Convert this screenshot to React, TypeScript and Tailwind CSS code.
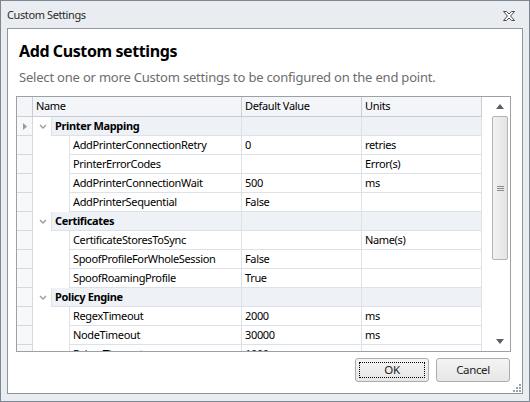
import React from "react";

type Row = { name: string; value: string; unit: string };
type Group = { title: string; rows: Row[] };

const groups: Group[] = [
  {
    title: "Printer Mapping",
    rows: [
      { name: "AddPrinterConnectionRetry", value: "0", unit: "retries" },
      { name: "PrinterErrorCodes", value: "", unit: "Error(s)" },
      { name: "AddPrinterConnectionWait", value: "500", unit: "ms" },
      { name: "AddPrinterSequential", value: "False", unit: "" },
    ],
  },
  {
    title: "Certificates",
    rows: [
      { name: "CertificateStoresToSync", value: "", unit: "Name(s)" },
      { name: "SpoofProfileForWholeSession", value: "False", unit: "" },
      { name: "SpoofRoamingProfile", value: "True", unit: "" },
    ],
  },
  {
    title: "Policy Engine",
    rows: [
      { name: "RegexTimeout", value: "2000", unit: "ms" },
      { name: "NodeTimeout", value: "30000", unit: "ms" },
      { name: "DriverTimeout", value: "1000", unit: "ms" },
    ],
  },
];

const line = "border-[#dde2e8]";

function CloseIcon() {
  return (
    <svg width="12" height="10" viewBox="0 0 12 10">
      <polygon
        points="0.5,0.5 3.5,0.5 6,3 8.5,0.5 11.5,0.5 7.5,5 11.5,9.5 8.5,9.5 6,7 3.5,9.5 0.5,9.5 4.5,5"
        fill="#fff"
        stroke="#4a4a4a"
        strokeWidth="1"
      />
    </svg>
  );
}

function Chevron() {
  return (
    <svg width="8" height="5" viewBox="0 0 8 5">
      <path d="M1 1 L4 4 L7 1" fill="none" stroke="#9a9a9a" strokeWidth="1.3" />
    </svg>
  );
}

function RowHead({ pointer = false }: { pointer?: boolean }) {
  return (
    <div className="flex h-[19px] w-[16px] shrink-0 items-center justify-center border-r border-b border-[#d5d9de] bg-[#f7f8f9]">
      {pointer && (
        <svg width="4" height="7" viewBox="0 0 4 7">
          <path d="M0 0 L4 3.5 L0 7 Z" fill="#9b9b9b" />
        </svg>
      )}
    </div>
  );
}

export default function App() {
  let first = true;
  return (
    <div className="relative h-[402px] w-[530px] overflow-hidden border border-[#7d8792] bg-[#e9ecf0] font-['Segoe_UI','Noto_Sans',sans-serif] text-[11px] tracking-[-0.35px] text-black">
      {/* title bar */}
      <div className="flex h-[27px] items-center justify-between pl-[6px] pr-[14px] pt-[2px] text-[#2b2b2b]">
        <span className="text-[11px] tracking-[-0.4px]">Custom Settings</span>
        <CloseIcon />
      </div>

      {/* client area */}
      <div className="relative mx-[6px] flex h-[366px] flex-col border border-[#8e959d] bg-white">
        <h1 className="mt-[10px] pl-[11px] text-[16px] leading-[24px] font-bold tracking-[-0.4px]">
          Add Custom settings
        </h1>
        <p className="mt-[5px] pl-[11px] text-[13px] leading-[18px] tracking-[-0.2px] text-[#6d6d6d]">
          Select one or more Custom settings to be configured on the end point.
        </p>

        {/* grid */}
        <div className="mt-[10px] ml-[8px] flex h-[256px] w-[495px] overflow-hidden border border-[#9aa1a9]">
          <div className="flex w-[465px] flex-col">
            {/* header */}
            <div className="flex h-[20px] shrink-0 border-b border-[#c9ced4] bg-[#f3f5f8]">
              <div className="w-[16px] border-r border-[#c9ced4]" />
              <div className="flex w-[209px] items-center border-r border-[#c9ced4] pl-[3px]">
                Name
              </div>
              <div className="flex w-[120px] items-center border-r border-[#c9ced4] pl-[3px]">
                Default Value
              </div>
              <div className="flex w-[120px] items-center border-r border-[#c9ced4] pl-[3px]">
                Units
              </div>
            </div>

            {/* rows */}
            <div className="flex-1 overflow-hidden">
              {groups.map((g) => {
                const pointer = first;
                first = false;
                return (
                  <div key={g.title}>
                    <div className="flex h-[19px]">
                      <RowHead pointer={pointer} />
                      <div className="flex w-[18px] items-center justify-center pl-[1px]">
                        <Chevron />
                      </div>
                      <div
                        className={`flex w-[191px] items-center border-r border-b border-l ${line} bg-[#eef2f7] pl-[3px] font-bold`}
                      >
                        {g.title}
                      </div>
                      <div className={`w-[120px] border-r border-b ${line} bg-[#eef2f7]`} />
                      <div className={`w-[120px] border-r border-b ${line} bg-[#eef2f7]`} />
                    </div>
                    {g.rows.map((r) => (
                      <div key={r.name} className="flex h-[19px]">
                        <RowHead />
                        <div className="w-[36px]" />
                        <div
                          className={`flex w-[173px] items-center border-r border-b border-l ${line} pl-[3px]`}
                        >
                          {r.name}
                        </div>
                        <div
                          className={`flex w-[120px] items-center border-r border-b ${line} pl-[3px]`}
                        >
                          {r.value}
                        </div>
                        <div
                          className={`flex w-[120px] items-center border-r border-b ${line} pl-[3px]`}
                        >
                          {r.unit}
                        </div>
                      </div>
                    ))}
                  </div>
                );
              })}
            </div>
          </div>

          {/* scrollbar */}
          <div className="flex w-[28px] flex-col bg-white pl-[10px] pr-[2px]">
            <div className="flex h-[19px] shrink-0 items-center justify-center">
              <svg width="8" height="5" viewBox="0 0 8 5">
                <path d="M0 5 L4 0 L8 5 Z" fill="#5f5f5f" />
              </svg>
            </div>
            <div className="flex-1">
              <div className="flex h-[144px] items-center justify-center rounded-[2px] border border-[#b3b3b3] bg-gradient-to-r from-[#f2f2f2] to-[#e4e4e4]">
                <div className="flex flex-col gap-[1px]">
                  <div className="h-px w-[7px] bg-[#8a8a8a]" />
                  <div className="h-px w-[7px] bg-[#8a8a8a]" />
                  <div className="h-px w-[7px] bg-[#8a8a8a]" />
                </div>
              </div>
            </div>
            <div className="flex h-[19px] shrink-0 items-center justify-center">
              <svg width="8" height="5" viewBox="0 0 8 5">
                <path d="M0 0 L4 5 L8 0 Z" fill="#5f5f5f" />
              </svg>
            </div>
          </div>
        </div>

        {/* buttons */}
        <div className="mt-[6px] mr-[12px] flex justify-end gap-[7px]">
          <button className="relative flex h-[24px] w-[74px] items-center justify-center rounded-[3px] border border-[#acacac] bg-gradient-to-b from-[#f4f4f4] to-[#e6e6e6] text-[11.5px] text-[#222]">
            <span className="absolute inset-[3px] border border-dotted border-black" />
            OK
          </button>
          <button className="flex h-[24px] w-[74px] items-center justify-center rounded-[3px] border border-[#acacac] bg-gradient-to-b from-[#f4f4f4] to-[#e6e6e6] text-[11.5px] text-[#222]">
            Cancel
          </button>
        </div>

        {/* size grip */}
        <svg
          className="absolute right-[1px] bottom-[1px]"
          width="9"
          height="9"
          viewBox="0 0 9 9"
        >
          {[
            [7, 1],
            [4, 4],
            [7, 4],
            [1, 7],
            [4, 7],
            [7, 7],
          ].map(([x, y]) => (
            <rect key={`${x}-${y}`} x={x} y={y} width="2" height="2" fill="#9aa2ab" />
          ))}
        </svg>
      </div>
    </div>
  );
}
